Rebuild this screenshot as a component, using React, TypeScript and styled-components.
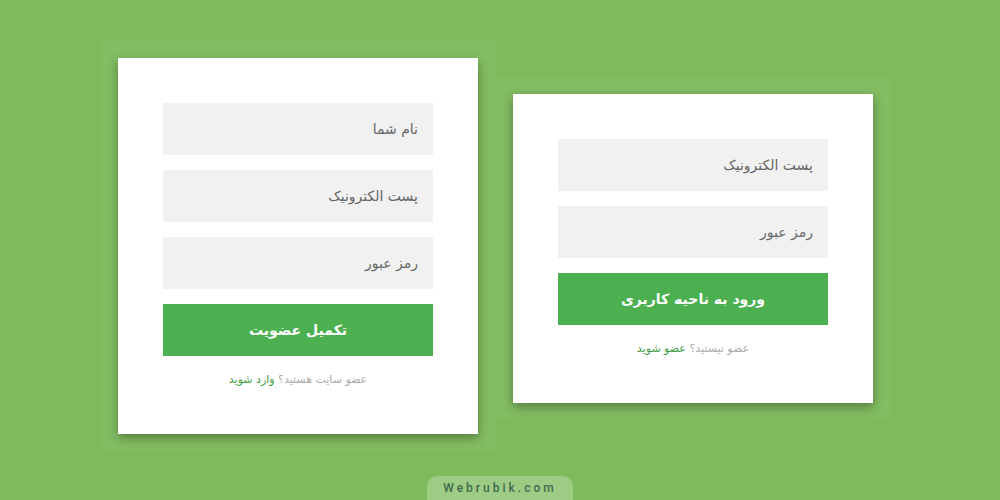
import styled, { createGlobalStyle } from "styled-components";

const GlobalStyle = createGlobalStyle`
    html, body {
        margin: 0;
        padding: 0;
    }
    body {
        background-color: #7fbb5d;
        font-family: "DejaVu Sans", "Noto Sans", sans-serif;
    }
`

const registerFields = ["نام شما", "پست الکترونیک", "رمز عبور"];
const loginFields = ["پست الکترونیک", "رمز عبور"];

export default function App() {
    return (
        <Page>
            <GlobalStyle/>
            <Stage>
                <Halo>
                    <Card>
                        {registerFields.map((f) => (
                            <Field key={f}>{f}</Field>
                        ))}
                        <Button>تکمیل عضویت</Button>
                        <Note>
                            عضو سایت هستید؟ <NoteLink>وارد شوید</NoteLink>
                        </Note>
                    </Card>
                </Halo>
                <Halo $shift={5}>
                    <Card>
                        {loginFields.map((f) => (
                            <Field key={f}>{f}</Field>
                        ))}
                        <Button>ورود به ناحیه کاربری</Button>
                        <Note>
                            عضو نیستید؟ <NoteLink>عضو شوید</NoteLink>
                        </Note>
                    </Card>
                </Halo>
            </Stage>
            <Badge>Webrubik.com</Badge>
        </Page>
    );
}

const Page = styled.div`
    position: relative;
    width: 1000px;
    height: 500px;
    overflow: hidden;
    background-color: #7fbb5d;
`

const Stage = styled.main`
    height: 492px;
    display: flex;
    align-items: center;
    padding-left: 100px;
    gap: 0;
`

const Halo = styled.div<{ $shift?: number }>`
    padding: 18px 18px 18px ${p => (p.$shift ? 17 : 18)}px;
    margin-top: ${p => p.$shift ?? 0}px;
    background-color: rgba(255, 255, 255, 0.03);
`

const Card = styled.form`
    width: 360px;
    box-sizing: border-box;
    padding: 45px 45px 46px;
    background: #fff;
    box-shadow: 0 4px 10px rgba(0, 0, 0, 0.35);
    display: flex;
    flex-direction: column;
    gap: 15px;
    direction: rtl;
`

const Field = styled.div`
    height: 52px;
    display: flex;
    align-items: center;
    padding: 0 15px;
    background: #f1f1f1;
    color: #666;
    font-size: 14px;
`

const Button = styled.button`
    height: 52px;
    border: none;
    background: #4caf50;
    color: #fff;
    font-family: inherit;
    font-size: 14px;
    font-weight: bold;
    cursor: pointer;
`

const Note = styled.p`
    margin: 1px 0 0;
    text-align: center;
    font-size: 11px;
    line-height: 16px;
    color: #a9a9a9;
`

const NoteLink = styled.a`
    color: #3e9b43;
    text-decoration: none;
`

const Badge = styled.div`
    position: absolute;
    left: 427px;
    bottom: 0;
    width: 146px;
    height: 24px;
    display: flex;
    align-items: center;
    justify-content: center;
    border-radius: 10px 10px 0 0;
    background: rgba(255, 255, 255, 0.25);
    color: #3d6b4f;
    font-family: Roboto, "Liberation Sans", sans-serif;
    font-size: 12px;
    font-weight: 500;
    letter-spacing: 3px;
`
